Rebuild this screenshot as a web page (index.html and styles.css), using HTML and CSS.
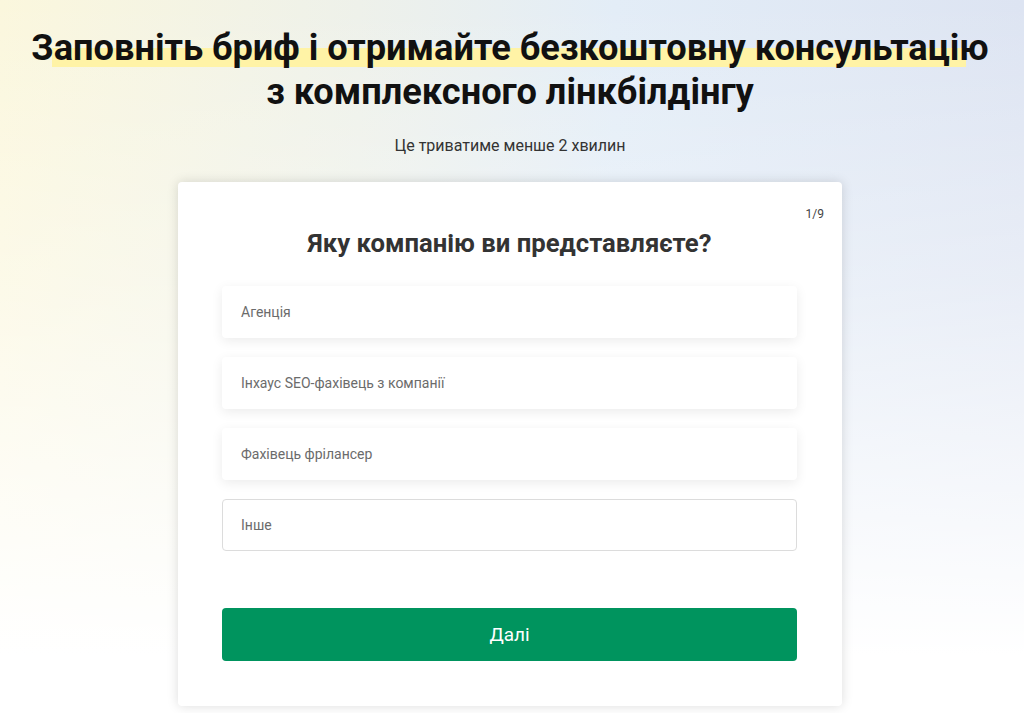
FILE: index.html
```html
<!DOCTYPE html>
<html lang="uk">
<head>
<meta charset="utf-8">
<title>Бриф</title>
<link rel="stylesheet" href="styles.css">
</head>
<body>
<main class="page">
  <h1 class="title">
    <span class="title-line title-line--mark">Заповніть бриф і отримайте безкоштовну консультацію</span>
    <span class="title-line">з комплексного лінкбілдінгу</span>
  </h1>
  <p class="subtitle">Це триватиме менше 2 хвилин</p>
  <section class="card">
    <div class="step">1/9</div>
    <h2 class="question">Яку компанію ви представляєте?</h2>
    <div class="options">
      <button class="option" type="button">Агенція</button>
      <button class="option" type="button">Інхаус SEO-фахівець з компанії</button>
      <button class="option" type="button">Фахівець фрілансер</button>
      <div class="option option--input">Інше</div>
    </div>
    <button class="next" type="button">Далі</button>
  </section>
</main>
</body>
</html>
```

FILE: styles.css
```css
* { box-sizing: border-box; }
html, body { margin: 0; padding: 0; }
body {
  font-family: Roboto, "Liberation Sans", Arial, sans-serif;
  color: #333;
  min-height: 713px;
  background:
    linear-gradient(to bottom, rgba(255,255,255,0) 0%, rgba(255,255,255,0.35) 40%, #ffffff 92%),
    linear-gradient(to right, #fbf7dd 0%, #eef1ea 35%, #e3edf7 60%, #dde4f2 100%);
}
.page {
  display: flex;
  flex-direction: column;
  align-items: center;
  padding: 26px 4px 0 0;
}
.title {
  margin: 0;
  font-size: 36.2px;
  line-height: 44px;
  font-weight: 700;
  color: #111;
  text-align: center;
  display: flex;
  flex-direction: column;
  align-items: center;
}
.title-line { display: block; position: relative; z-index: 0; }
.title-line--mark::before {
  content: "";
  position: absolute;
  left: 21px;
  right: 23px;
  top: 22px;
  height: 19px;
  background: #fff3a6;
  z-index: -1;
}
.subtitle {
  margin: 22px 0 0;
  font-size: 16px;
  line-height: 20px;
  color: #333;
}
.card {
  margin-top: 26px;
  width: 664px;
  background: #fff;
  border-radius: 4px;
  box-shadow: 0 0 12px rgba(0,0,0,0.14);
  padding: 25px 45px 45px 44px;
  display: flex;
  flex-direction: column;
}
.step {
  align-self: flex-end;
  margin-right: -27px;
  font-size: 12px;
  line-height: 14px;
  color: #444;
}
.question {
  margin: 7px 0 0;
  text-align: center;
  font-size: 25.7px;
  line-height: 30px;
  font-weight: 700;
  color: #333;
}
.options {
  margin-top: 28px;
  display: flex;
  flex-direction: column;
  gap: 19px;
}
.option {
  display: flex;
  align-items: center;
  height: 52px;
  padding: 0 18px;
  border: 1px solid transparent;
  border-radius: 4px;
  background: #fff;
  box-shadow: 0 3px 12px rgba(0,0,0,0.08);
  font-family: inherit;
  font-size: 14px;
  color: #6b6b6b;
  text-align: left;
  cursor: pointer;
}
.option--input {
  box-shadow: none;
  border-color: #dcdcdc;
  color: #6b6b6b;
}
.next {
  margin-top: 57px;
  height: 53px;
  border: 0;
  border-radius: 4px;
  background: #00945e;
  color: #fff;
  font-family: inherit;
  font-size: 19px;
  cursor: pointer;
}
```
